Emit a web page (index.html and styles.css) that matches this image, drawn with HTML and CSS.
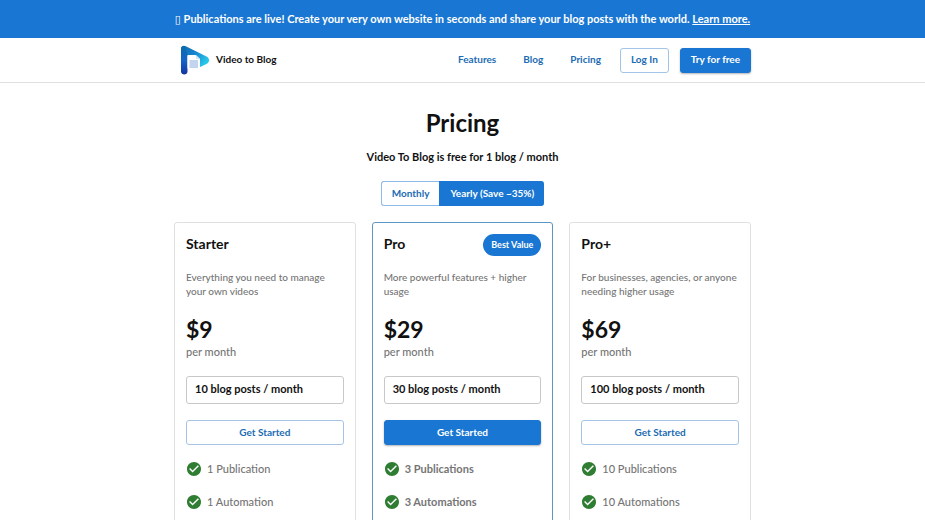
FILE: index.html
```html
<!DOCTYPE html>
<html lang="en">
<head>
    <meta charset="UTF-8">
    <meta name="viewport" content="width=device-width, initial-scale=1.0">
    <title>Pricing - Video to Blog</title>
    <link rel="stylesheet" href="styles.css">
</head>
<body>
    <svg width="0" height="0" class="sprite" aria-hidden="true">
        <symbol id="check" viewBox="2 2 20 20">
            <path fill="#2e7d32" d="M12 2C6.480 2 2 6.480 2 12s4.480 10 10 10 10-4.480 10-10S17.520 2 12 2zm-2 15l-5-5 1.410-1.410L10 14.170l7.590-7.590L19 8l-9 9z"/>
        </symbol>
    </svg>

    <div class="banner">
        <span class="banner-icon">▯</span> Publications are live! Create your very own website in seconds and share your blog posts with the world. <a href="#">Learn more.</a>
    </div>

    <header class="header">
        <div class="container header-inner">
            <a class="brand" href="#">
                <svg class="logo" viewBox="0 0 30 30" aria-hidden="true">
                    <defs>
                        <linearGradient id="bar" x1="0" y1="0" x2="0" y2="1">
                            <stop offset="0" stop-color="#0d6cab"/>
                            <stop offset="0.5" stop-color="#1565c8"/>
                            <stop offset="1" stop-color="#1433a0"/>
                        </linearGradient>
                        <linearGradient id="play" x1="0" y1="0" x2="1" y2="0.6">
                            <stop offset="0" stop-color="#0d6cab"/>
                            <stop offset="0.5" stop-color="#1583d0"/>
                            <stop offset="1" stop-color="#29c8e8"/>
                        </linearGradient>
                    </defs>
                    <path fill="url(#play)" d="M1 3.500C1 1 3.500 0 5.800 1.200L26.500 11.500c3.500 1.800 3.500 5.600 0 7.500L19 22.500V15l-4-4H7L1 14z"/>
                    <path fill="url(#bar)" d="M1 4c0-2.500 2-3.500 4-3l2.500 9v16.500C7.500 30.500 1 30.500 1 26.500z"/>
                    <path fill="#fff" d="M7.500 10h8l4.500 4v9.500H7.500z"/>
                    <path fill="#c3d5ee" d="M9.500 15H18V23H9.500z"/>
                    <path fill="#d8e6f6" d="M16 10v4h4z"/>
                </svg>
                <span class="brand-name">Video to Blog</span>
            </a>
            <nav class="nav">
                <a class="nav-link" href="#">Features</a>
                <a class="nav-link" href="#">Blog</a>
                <a class="nav-link" href="#">Pricing</a>
                <button class="btn btn-outline" type="button">Log In</button>
                <button class="btn btn-solid" type="button">Try for free</button>
            </nav>
        </div>
    </header>

    <main class="container pricing">
        <h1 class="title">Pricing</h1>
        <p class="subtitle">Video To Blog is free for 1 blog / month</p>

        <div class="toggle">
            <button class="toggle-btn" type="button" aria-pressed="false">Monthly</button>
            <button class="toggle-btn active" type="button" aria-pressed="true">Yearly (Save ~35%)</button>
        </div>

        <div class="plans">
            <section class="plan">
                <div class="plan-head">
                    <h2 class="plan-name">Starter</h2>
                </div>
                <p class="plan-desc">Everything you need to manage your own videos</p>
                <div class="price">$9</div>
                <div class="period">per month</div>
                <select class="posts" aria-label="Starter usage">
                    <option>10 blog posts / month</option>
                </select>
                <button class="btn btn-outline" type="button">Get Started</button>
                <ul class="features">
                    <li><svg class="check"><use href="#check"/></svg>1 Publication</li>
                    <li><svg class="check"><use href="#check"/></svg>1 Automation</li>
                </ul>
            </section>

            <section class="plan plan-featured">
                <div class="plan-head">
                    <h2 class="plan-name">Pro</h2>
                    <span class="badge">Best Value</span>
                </div>
                <p class="plan-desc">More powerful features + higher usage</p>
                <div class="price">$29</div>
                <div class="period">per month</div>
                <select class="posts" aria-label="Pro usage">
                    <option>30 blog posts / month</option>
                </select>
                <button class="btn btn-solid" type="button">Get Started</button>
                <ul class="features">
                    <li><svg class="check"><use href="#check"/></svg>3 Publications</li>
                    <li><svg class="check"><use href="#check"/></svg>3 Automations</li>
                </ul>
            </section>

            <section class="plan">
                <div class="plan-head">
                    <h2 class="plan-name">Pro+</h2>
                </div>
                <p class="plan-desc">For businesses, agencies, or anyone needing higher usage</p>
                <div class="price">$69</div>
                <div class="period">per month</div>
                <select class="posts" aria-label="Pro+ usage">
                    <option>100 blog posts / month</option>
                </select>
                <button class="btn btn-outline" type="button">Get Started</button>
                <ul class="features">
                    <li><svg class="check"><use href="#check"/></svg>10 Publications</li>
                    <li><svg class="check"><use href="#check"/></svg>10 Automations</li>
                </ul>
            </section>
        </div>
    </main>
</body>
</html>
```
FILE: styles.css
```css
* {
    box-sizing: border-box;
}

body {
    margin: 0;
    font-family: Lato, "Liberation Sans", sans-serif;
    font-size: 11px;
    font-weight: 700;
    line-height: 14px;
    color: #111;
    background-color: #fff;
}

h1, h2, p, ul {
    margin: 0;
    padding: 0;
}

button, select {
    font: inherit;
}

.sprite {
    display: block;
}

.container {
    width: 100%;
    max-width: 577px;
    margin: 0 auto;
}

/* Banner */
.banner {
    padding: 12px;
    text-align: center;
    font-size: 11px;
    color: #fff;
    background-color: #1976d2;
}

.banner a {
    color: #fff;
}

.banner-icon {
    font-family: "DejaVu Sans", sans-serif;
    line-height: 1;
}

/* Header */
.header {
    border-bottom: 1px solid #e0e0e0;
}

.header-inner {
    display: flex;
    align-items: center;
    justify-content: space-between;
    height: 44px;
    padding-left: 6px;
}

.brand {
    display: flex;
    align-items: center;
    gap: 6px;
    color: #111;
    font-size: 10px;
    text-decoration: none;
}

.brand-name {
    padding-bottom: 2px;
}

.logo {
    width: 30px;
    height: 30px;
}

.nav {
    display: flex;
    align-items: center;
    gap: 11px;
}

.nav-link {
    padding: 0 8px 2px;
    color: #1b6cb3;
    font-size: 10px;
    text-decoration: none;
}

/* Buttons */
.btn {
    height: 25px;
    padding: 0 10px 2px;
    border: 1px solid #1976d2;
    border-radius: 3px;
    font-size: 10px;
    cursor: pointer;
}

.btn-outline {
    color: #1b6cb3;
    background-color: #fff;
    border-color: #a3c4e4;
}

.btn-solid {
    color: #fff;
    background-color: #1976d2;
    box-shadow: 0 1px 2px rgba(0, 0, 0, 0.3);
}

/* Pricing */
.pricing {
    display: flex;
    flex-direction: column;
    align-items: center;
    padding-top: 24px;
}

.title {
    font-size: 24px;
    line-height: 32px;
}

.subtitle {
    margin: 11px 0 17px;
}

.toggle {
    display: flex;
    margin-bottom: 16px;
}

.toggle-btn {
    height: 25px;
    padding: 0 10px 2px;
    border: 1px solid #8ebae8;
    border-right: 0;
    border-radius: 3px 0 0 3px;
    color: #1b6cb3;
    background-color: #fff;
    font-size: 10px;
    cursor: pointer;
}

.toggle-btn.active {
    border-color: #1976d2;
    border-radius: 0 3px 3px 0;
    color: #fff;
    background-color: #1976d2;
}

/* Plans */
.plans {
    display: grid;
    grid-template-columns: repeat(3, 1fr);
    gap: 16px;
    width: 100%;
}

.plan {
    display: flex;
    flex-direction: column;
    padding: 11px 11px 24px;
    border: 1px solid #e0e0e0;
    border-radius: 3px;
}

.plan-featured {
    border-color: #5b96c4;
}

.plan-head {
    display: flex;
    align-items: center;
    justify-content: space-between;
    height: 21px;
    margin-bottom: 15px;
}

.plan-name {
    padding-bottom: 2px;
    font-size: 14px;
}

.badge {
    padding: 4px 8px;
    border-radius: 11px;
    color: #fff;
    background-color: #1976d2;
    font-size: 9px;
}

.plan-desc {
    min-height: 28px;
    margin-bottom: 15px;
    color: #757575;
    font-size: 10px;
    font-weight: 500;
}

.price {
    font-size: 23px;
    line-height: 32px;
}

.period {
    margin-bottom: 17px;
    color: #757575;
    font-weight: 500;
}

.posts {
    height: 28px;
    margin-bottom: 16px;
    padding: 0 8px 2px;
    border: 1px solid #c8c8c8;
    border-radius: 3px;
    color: #111;
    background-color: #fff;
    appearance: none;
}

.features {
    margin-top: 7px;
    list-style: none;
    color: #757575;
    font-weight: 500;
}

.features li {
    display: flex;
    align-items: center;
    gap: 6px;
    height: 33px;
    padding-left: 1px;
}

.plan-featured .features {
    font-weight: 700;
}

.check {
    width: 14px;
    height: 14px;
}
```
